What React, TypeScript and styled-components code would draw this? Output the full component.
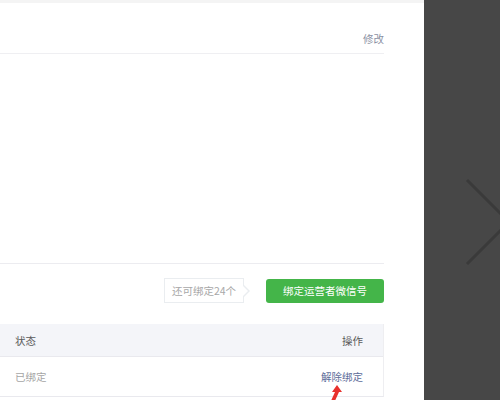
import React from 'react';
import styled, { createGlobalStyle } from 'styled-components';

const GlobalStyle = createGlobalStyle`
  html, body {
    margin: 0;
    padding: 0;
    background: #ffffff;
  }
  body {
    font-family: "Noto Sans CJK SC", "Liberation Sans", sans-serif;
    font-size: 10.5px;
    -webkit-font-smoothing: antialiased;
  }
`;

const Page = styled.div`
  display: flex;
  width: 500px;
  height: 400px;
  overflow: hidden;
`;

const Main = styled.div`
  width: 424px;
  display: flex;
  flex-direction: column;
  background: #ffffff;
  position: relative;
`;

const TopStrip = styled.div`
  height: 3px;
  background: #f4f4f4;
`;

const Content = styled.div`
  width: 384px;
  display: flex;
  flex-direction: column;
`;

const InfoHeader = styled.div`
  height: 51px;
  box-sizing: border-box;
  display: flex;
  align-items: flex-end;
  justify-content: flex-end;
  padding-bottom: 7px;
  border-bottom: 1px solid #efeff2;
`;

const Link = styled.a<{ $tone?: 'muted' | 'blue' }>`
  color: ${(p) => (p.$tone === 'muted' ? '#8a90a3' : '#5d6d9a')};
  font-size: 10.5px;
  line-height: 14px;
  text-decoration: none;
  cursor: pointer;
`;

const InfoBody = styled.div`
  height: 210px;
  box-sizing: border-box;
  border-bottom: 1px solid #ececf0;
`;

const Toolbar = styled.div`
  display: flex;
  justify-content: flex-end;
  align-items: center;
  gap: 22px;
  padding-top: 14px;
`;

const Tip = styled.div`
  position: relative;
  width: 80px;
  height: 25px;
  box-sizing: border-box;
  display: flex;
  align-items: center;
  justify-content: center;
  border: 1px solid #eaedf0;
  background: #fff;
  color: #a8a8a8;
  font-size: 10.5px;

  &::before,
  &::after {
    content: '';
    position: absolute;
    top: 50%;
    transform: translateY(-50%);
    border-style: solid;
    border-color: transparent;
  }
  &::before {
    right: -7px;
    border-width: 6px 0 6px 6px;
    border-left-color: #eaedf0;
  }
  &::after {
    right: -5px;
    border-width: 5px 0 5px 5px;
    border-left-color: #fff;
  }
`;

const GreenButton = styled.button`
  width: 118px;
  height: 24px;
  border: none;
  border-radius: 3px;
  background: #44b549;
  color: #ffffff;
  font-family: inherit;
  font-size: 10.5px;
  padding: 0;
  cursor: pointer;
`;

const Table = styled.div`
  margin-top: 21px;
  border-right: 1px solid #eeeef1;
  border-bottom: 1px solid #e9e9ee;
`;

const Row = styled.div<{ $head?: boolean }>`
  display: flex;
  justify-content: space-between;
  align-items: center;
  height: ${(p) => (p.$head ? '33px' : '39px')};
  padding: 0 20px 0 15px;
  background: ${(p) => (p.$head ? '#f4f5f9' : '#ffffff')};
  border-bottom: ${(p) => (p.$head ? '1px solid #e9e9ee' : 'none')};
  box-sizing: border-box;
`;

const Cell = styled.span<{ $muted?: boolean }>`
  font-size: 10.5px;
  color: ${(p) => (p.$muted ? '#a5a5a5' : '#5a5a5a')};
`;

const Arrow = styled.svg`
  position: absolute;
  left: 326px;
  top: 383px;
`;

const Side = styled.div`
  flex: 1;
  background: #474747;
  display: flex;
  align-items: center;
  justify-content: flex-end;
  overflow: hidden;
`;

const Chevron = styled.svg`
  margin-top: 44px;
  margin-right: -14px;
  filter: blur(0.6px);
`;

export default function App() {
  return (
    <Page>
      <GlobalStyle />
      <Main>
        <TopStrip />
        <Content>
          <InfoHeader>
            <Link $tone="muted">修改</Link>
          </InfoHeader>
          <InfoBody />
          <Toolbar>
            <Tip>还可绑定24个</Tip>
            <GreenButton>绑定运营者微信号</GreenButton>
          </Toolbar>
          <Table>
            <Row $head>
              <Cell>状态</Cell>
              <Cell>操作</Cell>
            </Row>
            <Row>
              <Cell $muted>已绑定</Cell>
              <Link $tone="blue">解除绑定</Link>
            </Row>
          </Table>
        </Content>
        <Arrow width="20" height="20" viewBox="0 0 20 20">
          <path d="M11 2 L16 9 L13 9 L8 20 L4 20 L9 9 L6 9 Z" fill="#e8312d" />
        </Arrow>
      </Main>
      <Side>
        <Chevron width="50" height="90" viewBox="0 0 50 90">
          <path d="M3 3 L45 45 L3 87" fill="none" stroke="#3a3a3a" strokeWidth="3" />
        </Chevron>
      </Side>
    </Page>
  );
}
